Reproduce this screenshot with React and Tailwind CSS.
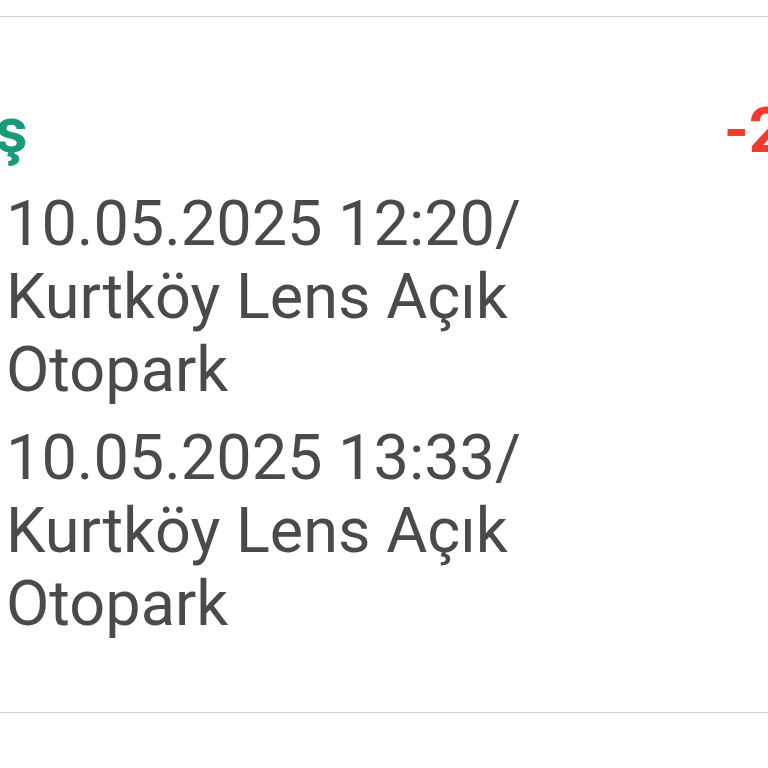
import React from 'react';

// Parking transaction card (zoomed crop)
const visits = [
  { time: '10.05.2025 12:20/', place: 'Kurtköy Lens Açık', rest: 'Otopark' },
  { time: '10.05.2025 13:33/', place: 'Kurtköy Lens Açık', rest: 'Otopark' },
];

export default function App() {
  return (
    <div
      className="w-[768px] h-[768px] overflow-hidden bg-white"
      style={{ fontFamily: 'Roboto, "Noto Sans", sans-serif' }}
    >
      <div className="h-[16px]" />
      <div className="border-t border-b border-[#cfcfcf] pt-[77px] pb-[72px]">
        {/* Header row */}
        <div className="flex items-baseline text-[63px] leading-[73px] font-bold">
          <div className="flex-1 min-w-0">
            <span className="block -ml-[104px] whitespace-nowrap text-[#1b9a7b]">Giriş</span>
          </div>
          <div className="w-[44px] shrink-0 whitespace-nowrap text-[#ef3a2d]">-25,00 TL</div>
        </div>

        {/* Entry / exit */}
        <div className="mt-[20px] pl-[6px] flex flex-col gap-[15px] text-[63px] leading-[73px] text-[#4a4a4a]">
          {visits.map((v, i) => (
            <div key={i}>
              <div className="whitespace-nowrap">{v.time}</div>
              <div className="whitespace-nowrap">{v.place}</div>
              <div className="whitespace-nowrap">{v.rest}</div>
            </div>
          ))}
        </div>
      </div>
    </div>
  );
}
